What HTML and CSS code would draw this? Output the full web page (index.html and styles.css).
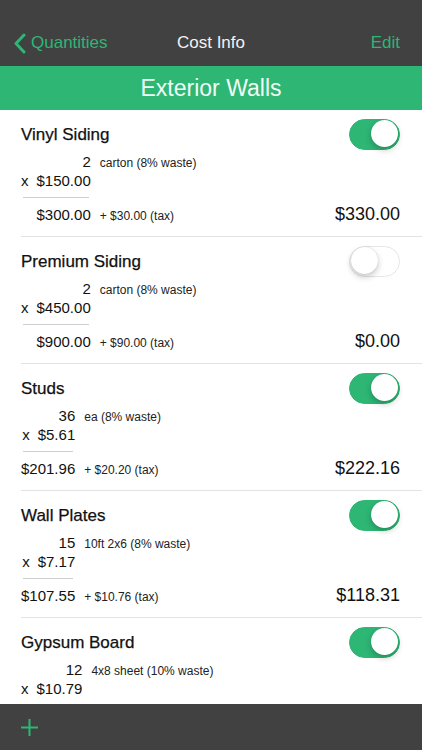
FILE: index.html
```html
<!DOCTYPE html>
<html lang="en">
<head>
    <meta charset="UTF-8">
    <meta name="viewport" content="width=device-width, initial-scale=1.0">
    <title>Cost Info</title>
    <link rel="stylesheet" href="styles.css">
</head>

<body>
    <header class="navbar">
        <a href="#" class="back">
            <svg width="13" height="21" viewBox="0 0 13 21"><polyline points="11,2 3,10.5 11,19" fill="none" stroke="#2db674" stroke-width="3" stroke-linecap="round" stroke-linejoin="round"/></svg>
            Quantities
        </a>
        <span class="nav-title">Cost Info</span>
        <a href="#" class="edit">Edit</a>
    </header>
    <div class="band">Exterior Walls</div>

    <ul class="items">
        <li class="item">
            <div class="item-head">
                <span class="name">Vinyl Siding</span>
                <span class="toggle on"></span>
            </div>
            <div class="calc">
                <span class="qty">2</span><span class="unit">carton (8% waste)</span><span></span>
                <span class="price"><span class="x">x</span>$150.00</span><span></span><span></span>
                <span class="rule"></span><span></span><span></span>
                <span class="sub">$300.00</span><span class="tax">+ $30.00 (tax)</span><span class="total">$330.00</span>
            </div>
        </li>
        <li class="item">
            <div class="item-head">
                <span class="name">Premium Siding</span>
                <span class="toggle"></span>
            </div>
            <div class="calc">
                <span class="qty">2</span><span class="unit">carton (8% waste)</span><span></span>
                <span class="price"><span class="x">x</span>$450.00</span><span></span><span></span>
                <span class="rule"></span><span></span><span></span>
                <span class="sub">$900.00</span><span class="tax">+ $90.00 (tax)</span><span class="total">$0.00</span>
            </div>
        </li>
        <li class="item">
            <div class="item-head">
                <span class="name">Studs</span>
                <span class="toggle on"></span>
            </div>
            <div class="calc">
                <span class="qty">36</span><span class="unit">ea (8% waste)</span><span></span>
                <span class="price"><span class="x">x</span>$5.61</span><span></span><span></span>
                <span class="rule"></span><span></span><span></span>
                <span class="sub">$201.96</span><span class="tax">+ $20.20 (tax)</span><span class="total">$222.16</span>
            </div>
        </li>
        <li class="item">
            <div class="item-head">
                <span class="name">Wall Plates</span>
                <span class="toggle on"></span>
            </div>
            <div class="calc">
                <span class="qty">15</span><span class="unit">10ft 2x6 (8% waste)</span><span></span>
                <span class="price"><span class="x">x</span>$7.17</span><span></span><span></span>
                <span class="rule"></span><span></span><span></span>
                <span class="sub">$107.55</span><span class="tax">+ $10.76 (tax)</span><span class="total">$118.31</span>
            </div>
        </li>
        <li class="item">
            <div class="item-head">
                <span class="name">Gypsum Board</span>
                <span class="toggle on"></span>
            </div>
            <div class="calc">
                <span class="qty">12</span><span class="unit">4x8 sheet (10% waste)</span><span></span>
                <span class="price"><span class="x">x</span>$10.79</span><span></span><span></span>
            </div>
        </li>
    </ul>

    <footer class="toolbar">
        <svg width="17" height="17" viewBox="0 0 17 17"><path d="M8.5 0V17M0 8.5H17" stroke="#2db674" stroke-width="2"/></svg>
    </footer>
</body>
</html>
```

FILE: styles.css
```css
*
{
    margin:0;
    padding:0;
    box-sizing: border-box;
    font-family:'Liberation Sans', Arial, sans-serif;
}
body
{
    height:100vh;
    display:flex;
    flex-direction:column;
    overflow:hidden;
    background:#fff;
    color:#111;
}
a
{
    text-decoration:none;
}

/* top navigation */
.navbar
{
    height:66px;
    padding:20px 22px 0 13px;
    display:flex;
    justify-content:space-between;
    align-items:center;
    background:#414142;
    font-size:17px;
    position:relative;
}
.back
{
    display:flex;
    align-items:center;
    gap:5px;
    color:#2db674;
}
.nav-title
{
    position:absolute;
    left:0;
    right:0;
    bottom:13px;
    text-align:center;
    color:#f2f2f2;
    pointer-events:none;
}
.edit
{
    color:#2db674;
}
.band
{
    height:44px;
    line-height:44px;
    text-align:center;
    background:#2db674;
    color:#f0fbf4;
    font-size:23px;
}

/* cost rows */
.items
{
    flex:1;
    overflow:hidden;
    list-style:none;
}
.item
{
    margin-left:21px;
    padding:9px 22px 11px 0;
    height:127px;
    border-bottom:1px solid #e3e3e3;
}
.item-head
{
    display:flex;
    justify-content:space-between;
    align-items:center;
    height:31px;
}
.name
{
    font-size:17px;
    color:#111;
    -webkit-text-stroke:0.25px #111;
}
.toggle
{
    width:51px;
    height:31px;
    margin-top:-1px;
    border-radius:16px;
    border:1.5px solid #e6e6e6;
    background:#fff;
    position:relative;
}
.toggle::after
{
    content:"";
    position:absolute;
    top:0.5px;
    left:0.5px;
    width:27px;
    height:27px;
    border-radius:50%;
    background:#fff;
    box-shadow:0 3px 6px rgba(0,0,0,0.22), 0 0 1px rgba(0,0,0,0.2);
}
.toggle.on
{
    border-color:#2db674;
    background:#2db674;
}
.toggle.on::after
{
    left:20.5px;
}
.calc
{
    display:grid;
    grid-template-columns:auto auto 1fr;
    column-gap:9px;
    align-items:baseline;
    margin-top:2px;
}
.qty, .price, .sub
{
    font-size:15px;
    text-align:right;
    line-height:19px;
    white-space:nowrap;
}
.x
{
    margin-right:8px;
}
.unit, .tax
{
    font-size:12px;
    color:#222;
    white-space:nowrap;
}
.rule
{
    align-self:start;
    height:1px;
    margin:7px 2px 6px;
    background:#cfcfcf;
}
.sub
{
    line-height:20px;
}
.total
{
    text-align:right;
    font-size:18px;
}

/* bottom toolbar */
.toolbar
{
    height:46px;
    flex-shrink:0;
    padding-left:21px;
    display:flex;
    align-items:center;
    background:#414142;
}
```
